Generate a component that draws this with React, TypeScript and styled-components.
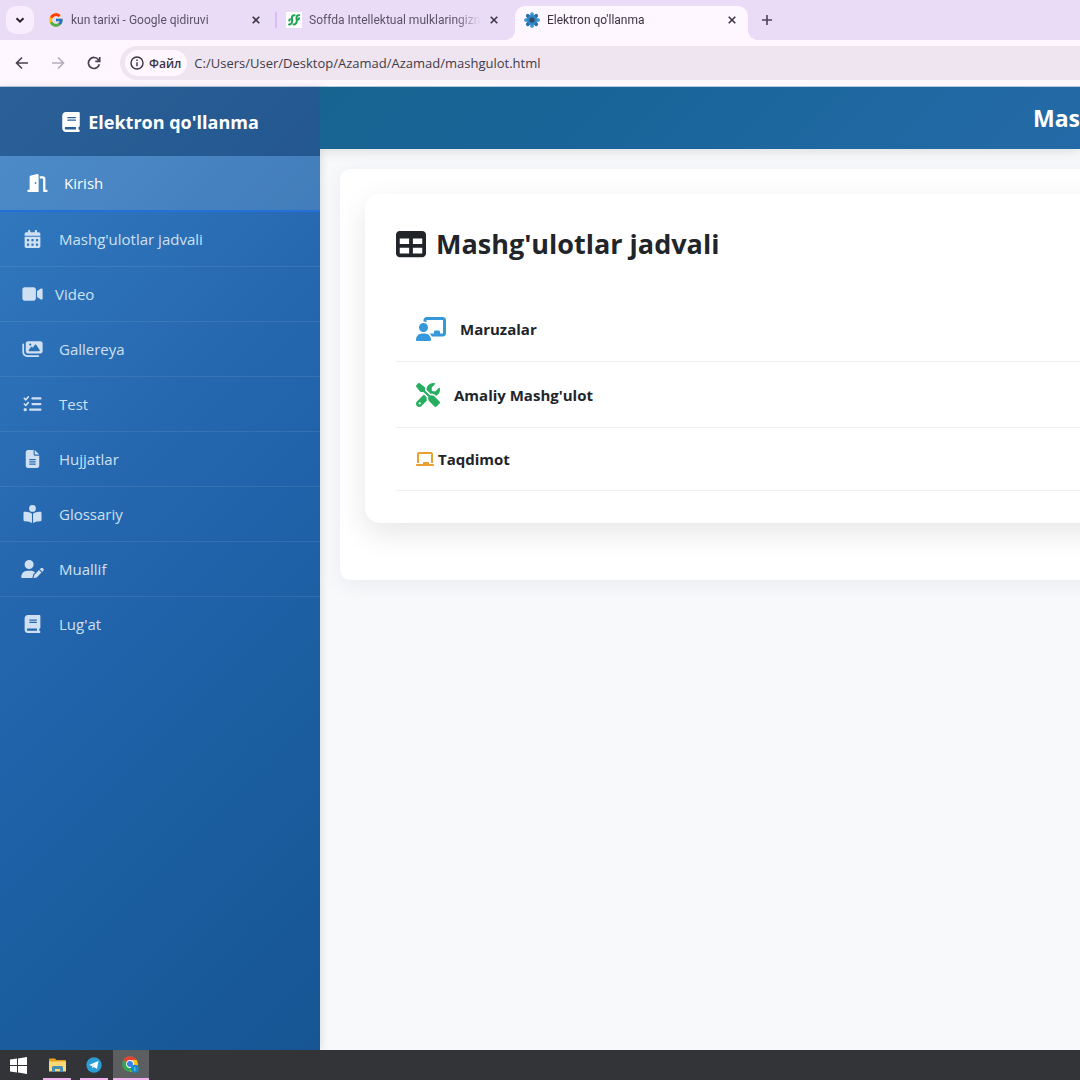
import React from "react";
import styled, { createGlobalStyle, css } from "styled-components";
import { FcGoogle } from "react-icons/fc";
import {
  FaBook,
  FaBookOpenReader,
  FaCalendarDays,
  FaChalkboard,
  FaChalkboardUser,
  FaDoorOpen,
  FaFileLines,
  FaImages,
  FaListCheck,
  FaScrewdriverWrench,
  FaTable,
  FaUserPen,
  FaVideo,
} from "react-icons/fa6";
import type { IconType } from "react-icons";

const GlobalStyle = createGlobalStyle`
  *, *::before, *::after { box-sizing: border-box; }
  body {
    margin: 0;
    background: #f8f9fa;
    color: #212529;
    font-family: "Open Sans", "Noto Sans", sans-serif;
    font-size: 15px;
  }
  button, input { font: inherit; color: inherit; }
  button { border: 0; padding: 0; background: none; cursor: pointer; }
  svg { display: block; flex: none; }
`;

const Screen = styled.div`
  display: flex;
  flex-direction: column;
  height: 100vh;
  overflow: hidden;
`;

/* ---------- Browser window ---------- */

const TabStrip = styled.div`
  display: flex;
  align-items: flex-end;
  height: 40px;
  padding-left: 6px;
  background: #eadcf6;
`;

const TabSearch = styled.button`
  display: grid;
  place-items: center;
  width: 28px;
  height: 28px;
  margin: 0 5px 6px 0;
  border-radius: 10px;
  background: #f8edfd;
  color: #29222e;
`;

const Tab = styled.div<{ $active?: boolean }>`
  position: relative;
  display: flex;
  align-items: center;
  gap: 7px;
  width: 233px;
  height: 34px;
  padding: 0 10px 6px 9px;
  border-radius: 10px 10px 0 0;
  color: #5d5166;
  font-family: Roboto, "Noto Sans", sans-serif;
  font-size: 12px;
  ${(p) =>
    p.$active &&
    css`
      background: #fef7ff;
      color: #3a333f;
      &::before,
      &::after {
        content: "";
        position: absolute;
        bottom: 0;
        width: 10px;
        height: 10px;
      }
      &::before {
        left: -10px;
        background: radial-gradient(circle at 0 0, transparent 10px, #fef7ff 10px);
      }
      &::after {
        right: -10px;
        background: radial-gradient(circle at 100% 0, transparent 10px, #fef7ff 10px);
      }
    `}
`;

const TabTitle = styled.button`
  flex: 1;
  min-width: 0;
  overflow: hidden;
  white-space: nowrap;
  text-align: left;
  line-height: 18px;
  mask-image: linear-gradient(to right, #000 146px, transparent 172px);
`;

const CloseButton = styled.button`
  display: grid;
  place-items: center;
  width: 12px;
  height: 16px;
  color: #3f3646;
`;

const TabGap = styled.span<{ $line?: boolean }>`
  width: 5px;
  height: 16px;
  margin-bottom: 12px;
  border-right: 2px solid ${(p) => (p.$line ? "#d8bdfa" : "transparent")};
`;

const NewTab = styled.button`
  display: grid;
  place-items: center;
  width: 28px;
  height: 28px;
  margin: 0 0 6px 5px;
  color: #4c4055;
`;

const Toolbar = styled.div`
  display: flex;
  align-items: center;
  height: 47px;
  padding-left: 14px;
  border-bottom: 1px solid #b9c9dc;
  background: #fef7ff;
`;

const NavButton = styled.button<{ $muted?: boolean }>`
  display: grid;
  place-items: center;
  width: 16px;
  height: 28px;
  margin-right: 20px;
  color: ${(p) => (p.$muted ? "#b5adb8" : "#48414d")};
`;

const AddressBar = styled.div`
  display: flex;
  flex: 1;
  align-items: center;
  gap: 7px;
  height: 34px;
  margin-left: -2px;
  padding-left: 5px;
  border-radius: 17px 0 0 17px;
  background: #efe5f1;
`;

const FileChip = styled.button`
  display: flex;
  align-items: center;
  gap: 5px;
  height: 26px;
  padding: 0 6px 0 5px;
  border-radius: 13px;
  background: #fef7ff;
  color: #3a333f;
  font-size: 12px;
  font-weight: 600;
`;

const AddressInput = styled.input`
  flex: 1;
  min-width: 0;
  padding: 0;
  border: 0;
  outline: 0;
  background: transparent;
  color: #423b46;
  font-size: 13px;
`;

/* ---------- Page ---------- */

const Page = styled.div`
  display: flex;
  flex: 1;
  min-height: 0;
  background: #f8f9fb;
`;

const Sidebar = styled.aside`
  width: 320px;
  flex: none;
  background: linear-gradient(135deg, #347dc2 0%, #2769b1 36%, #2163ab 52%, #1b5fa1 68%, #175594 100%);
  box-shadow: 2px 0 8px rgba(0, 0, 0, 0.1);
`;

const Brand = styled.div`
  display: flex;
  align-items: center;
  justify-content: center;
  gap: 7px;
  height: 69px;
  background: rgba(30, 62, 100, 0.45);
  color: #fff;
  font-size: 18px;
  font-weight: 700;
`;

const MenuLink = styled.a<{ $active?: boolean; $gap?: number }>`
  display: flex;
  align-items: center;
  gap: ${(p) => p.$gap ?? 17}px;
  height: 55px;
  padding-left: ${(p) => (p.$active ? 27 : 22)}px;
  border-bottom: 1px solid rgba(255, 255, 255, 0.08);
  color: #cfe0f2;
  font-size: 15px;
  text-decoration: none;
  &:last-child {
    border-bottom-color: transparent;
  }
  ${(p) =>
    p.$active &&
    css`
      height: 56px;
      border-bottom: 2px solid #2470d8;
      background: rgba(255, 255, 255, 0.13);
      background-clip: padding-box;
      color: #fff;
    `}
`;

const MenuIcon = styled.span`
  display: flex;
  justify-content: center;
  width: 20px;
  svg {
    width: 23px;
    height: 18px;
  }
`;

const Main = styled.main`
  display: flex;
  flex: 1;
  flex-direction: column;
  min-width: 0;
  overflow: hidden;
`;

const PageHeader = styled.header`
  display: flex;
  align-items: center;
  justify-content: flex-end;
  flex: none;
  height: 62px;
  background: linear-gradient(135deg, #176390 0%, #19659a 40%, #246aa8 100%);
  box-shadow: 0 2px 12px rgba(0, 0, 0, 0.12);
  color: #fff;
  font-size: 23px;
  font-weight: 700;
`;

const ContentPanel = styled.div`
  margin: 20px -40px 0 20px;
  padding: 25px 0 57px 25px;
  border-radius: 10px;
  background: #fff;
  box-shadow: 0 5px 20px rgba(40, 60, 80, 0.07);
`;

const Card = styled.section`
  padding: 27px 0 32px 31px;
  border-radius: 15px;
  background: #fff;
  box-shadow: 0 10px 30px rgba(0, 0, 0, 0.1);
`;

const CardTitle = styled.h1`
  display: flex;
  align-items: center;
  gap: 10px;
  margin: 0 0 29px;
  color: #212529;
  font-size: 27px;
  font-weight: 700;
  line-height: 46px;
`;

const LessonList = styled.ul`
  margin: 0;
  padding: 0;
  list-style: none;
`;

const LessonItem = styled.li`
  border-bottom: 1px solid #eeeff0;
`;

const LessonLink = styled.a<{ $tint: string; $large?: boolean; $iconWidth: number }>`
  display: flex;
  align-items: center;
  gap: ${(p) => (p.$large ? 14 : 4)}px;
  height: ${(p) => (p.$large ? 65 : 62)}px;
  padding-left: 20px;
  color: #212529;
  font-size: 15px;
  font-weight: 700;
  text-decoration: none;
  svg {
    width: ${(p) => p.$iconWidth}px;
    height: ${(p) => (p.$large ? 24 : 16)}px;
    color: ${(p) => p.$tint};
  }
`;

/* ---------- Desktop taskbar ---------- */

const Taskbar = styled.nav`
  display: flex;
  flex: none;
  gap: 1px;
  height: 30px;
  background: #323438;
`;

const TaskButton = styled.button<{ $open?: boolean; $active?: boolean }>`
  display: grid;
  place-items: center;
  width: 36px;
  height: 30px;
  background-color: ${(p) => (p.$active ? "#5c5e60" : "transparent")};
  background-image: ${(p) => (p.$open ? "linear-gradient(#f3b3f0, #f3b3f0)" : "none")};
  background-position: center bottom;
  background-repeat: no-repeat;
  background-size: ${(p) => (p.$active ? 36 : 28)}px 2px;
`;

const TaskSpacer = styled.span`
  width: 1px;
`;

const CloseIcon = () => (
  <svg width="10" height="10" viewBox="0 0 10 10" stroke="currentColor" strokeWidth="1.6">
    <path d="M1.700 1.700l6.600 6.600M8.300 1.700L1.700 8.300" />
  </svg>
);

const SoffIcon = () => (
  <svg width="16" height="16" viewBox="0 0 16 16">
    <path d="M0 0h16v16H0z" fill="#fff" />
    <g fill="none" stroke="#1fa253" strokeWidth="2" strokeLinecap="round" strokeLinejoin="round">
      <path d="M8.600 3.200C6.900 3 6 4 5.900 5.500C5.800 7.400 6.600 8 6 10C5.500 11.800 4.600 12.600 3 12.400M3.200 8.600C3.300 7.400 4.200 7 5.800 7.200" />
      <path d="M13.200 3.200C11.500 3 10.600 4 10.500 5.500C10.400 7.400 11.200 8 10.600 10C10.100 11.800 9.200 12.600 7.600 12.400M10.800 7.800C12.200 7.900 13 7.300 13.100 6.200" />
    </g>
  </svg>
);

const FlowerIcon = () => (
  <svg width="16" height="16" viewBox="0 0 16 16">
    {[0, 45, 90, 135].map((angle) => (
      <g key={angle} transform={`rotate(${angle} 8 8)`} fill={angle % 90 ? "#2a6fae" : "#3a97d6"}>
        <rect x="6.200" y="0.200" width="3.600" height="15.600" rx="1.600" />
      </g>
    ))}
    <circle cx="8" cy="8" r="4.800" fill="#2f86c5" />
    <circle cx="8" cy="8" r="2.600" fill="#334a60" />
  </svg>
);

const WindowsIcon = () => (
  <svg width="17" height="17" viewBox="0 0 17 17" fill="#fff">
    <path d="M0 2.500L7 1.500V8H0zM8 1.400L17 0V8H8zM0 9H7V15.500L0 14.500zM8 9H17V17L8 15.600z" />
  </svg>
);

const ExplorerIcon = () => (
  <svg width="17" height="15" viewBox="0 0 17 15">
    <path d="M0 1.500Q0 .5 1 .5H6L7.500 2H16Q17 2 17 3V6H0z" fill="#e3a31b" />
    <path d="M0 3.500H17V13.500H0z" fill="#fbd976" />
    <path d="M3 14V9.500Q3 8 4.500 8H12.500Q14 8 14 9.500V14H11V11H6V14z" fill="#4590b4" />
  </svg>
);

const TelegramIcon = () => (
  <svg width="16" height="16" viewBox="0 0 16 16">
    <circle cx="8" cy="8" r="7.700" fill="#2c9dd4" />
    <path d="M3 7.900L12.500 4.100L11 12.100L7.900 10L6.500 11.300L6.200 9z" fill="#fff" />
    <path d="M6.200 9L10.500 6L7.200 9.500L6.500 11.300z" fill="#b9dced" />
  </svg>
);

const ChromeIcon = () => (
  <svg width="18" height="18" viewBox="0 0 18 18">
    <circle cx="8" cy="8" r="7.800" fill="#33a651" />
    <path d="M8 8L1.250 4.100A7.800 7.800 0 0 1 14.750 4.100z" fill="#e54335" />
    <path d="M8 8L8 4.100H14.750A7.800 7.800 0 0 1 8 15.800L11.400 9.900z" fill="#fac41c" />
    <circle cx="8" cy="8" r="3.900" fill="#fff" />
    <circle cx="8" cy="8" r="3" fill="#3c7fe8" />
    <circle cx="12.800" cy="12.800" r="4" fill="#168ac8" />
    <path d="M12 11h1.600v4H12z" fill="#54b5e1" />
  </svg>
);

type MenuEntry = { label: string; icon: IconType; active?: boolean; gap?: number };

const menu: MenuEntry[] = [
  { label: "Kirish", icon: FaDoorOpen, active: true },
  { label: "Mashg'ulotlar jadvali", icon: FaCalendarDays },
  { label: "Video", icon: FaVideo, gap: 13 },
  { label: "Gallereya", icon: FaImages },
  { label: "Test", icon: FaListCheck },
  { label: "Hujjatlar", icon: FaFileLines },
  { label: "Glossariy", icon: FaBookOpenReader },
  { label: "Muallif", icon: FaUserPen },
  { label: "Lug'at", icon: FaBook },
];

const lessons = [
  { label: "Maruzalar", icon: FaChalkboardUser, tint: "#3498db", large: true, iconWidth: 30 },
  { label: "Amaliy Mashg'ulot", icon: FaScrewdriverWrench, tint: "#27ae60", large: true, iconWidth: 24 },
  { label: "Taqdimot", icon: FaChalkboard, tint: "#e9a030", large: false, iconWidth: 18 },
];

export default function App() {
  return (
    <Screen>
      <GlobalStyle />
      <TabStrip>
        <TabSearch aria-label="Search tabs">
          <svg width="10" height="10" viewBox="0 0 10 10" fill="none" stroke="currentColor" strokeWidth="2">
            <path d="M1.500 3.200L5 6.700L8.500 3.200" />
          </svg>
        </TabSearch>
        <Tab>
          <FcGoogle size={16} />
          <TabTitle>kun tarixi - Google qidiruvi</TabTitle>
          <CloseButton aria-label="Close tab"><CloseIcon /></CloseButton>
        </Tab>
        <TabGap $line />
        <Tab>
          <SoffIcon />
          <TabTitle>Soffda Intellektual mulklaringizn</TabTitle>
          <CloseButton aria-label="Close tab"><CloseIcon /></CloseButton>
        </Tab>
        <TabGap />
        <Tab $active>
          <FlowerIcon />
          <TabTitle>Elektron qo'llanma</TabTitle>
          <CloseButton aria-label="Close tab"><CloseIcon /></CloseButton>
        </Tab>
        <NewTab aria-label="New tab">
          <svg width="12" height="12" viewBox="0 0 12 12" stroke="currentColor" strokeWidth="1.600">
            <path d="M6 1v10M1 6h10" />
          </svg>
        </NewTab>
      </TabStrip>
      <Toolbar>
        <NavButton aria-label="Back">
          <svg width="14" height="14" viewBox="0 0 14 14" fill="none" stroke="currentColor" strokeWidth="1.600">
            <path d="M13 7H2M7 1.500L1.500 7L7 12.500" />
          </svg>
        </NavButton>
        <NavButton aria-label="Forward" $muted>
          <svg width="14" height="14" viewBox="0 0 14 14" fill="none" stroke="currentColor" strokeWidth="1.600">
            <path d="M1 7H12M7 1.500L12.500 7L7 12.500" />
          </svg>
        </NavButton>
        <NavButton aria-label="Reload">
          <svg width="14" height="14" viewBox="0 0 14 14" fill="none" stroke="currentColor" strokeWidth="1.700">
            <path d="M12.300 8.200A5.500 5.500 0 1 1 11.500 3.900L12.500 5.200M12.700 1V5.300H8.300" />
          </svg>
        </NavButton>
        <AddressBar>
          <FileChip>
            <svg width="14" height="14" viewBox="0 0 14 14" fill="none" stroke="currentColor" strokeWidth="1.400">
              <circle cx="7" cy="7" r="6" />
              <path d="M7 6.200V10.300M7 3.600V5" />
            </svg>
            Файл
          </FileChip>
          <AddressInput
            aria-label="Address"
            defaultValue="C:/Users/User/Desktop/Azamad/Azamad/mashgulot.html"
          />
        </AddressBar>
      </Toolbar>

      <Page>
        <Sidebar>
          <Brand>
            <FaBook size={20} />
            Elektron qo'llanma
          </Brand>
          <nav>
            {menu.map(({ label, icon: Icon, active, gap }) => (
              <MenuLink key={label} href="#" $active={active} $gap={gap}>
                <MenuIcon><Icon /></MenuIcon>
                {label}
              </MenuLink>
            ))}
          </nav>
        </Sidebar>
        <Main>
          <PageHeader>Mas</PageHeader>
          <ContentPanel>
            <Card>
              <CardTitle>
                <FaTable size={30} />
                Mashg'ulotlar jadvali
              </CardTitle>
              <LessonList>
                {lessons.map(({ label, icon: Icon, tint, large, iconWidth }) => (
                  <LessonItem key={label}>
                    <LessonLink href="#" $tint={tint} $large={large} $iconWidth={iconWidth}>
                      <Icon />
                      {label}
                    </LessonLink>
                  </LessonItem>
                ))}
              </LessonList>
            </Card>
          </ContentPanel>
        </Main>
      </Page>

      <Taskbar>
        <TaskButton aria-label="Start"><WindowsIcon /></TaskButton>
        <TaskSpacer />
        <TaskButton aria-label="File Explorer" $open><ExplorerIcon /></TaskButton>
        <TaskButton aria-label="Telegram" $open><TelegramIcon /></TaskButton>
        <TaskButton aria-label="Chrome" $open $active><ChromeIcon /></TaskButton>
      </Taskbar>
    </Screen>
  );
}
